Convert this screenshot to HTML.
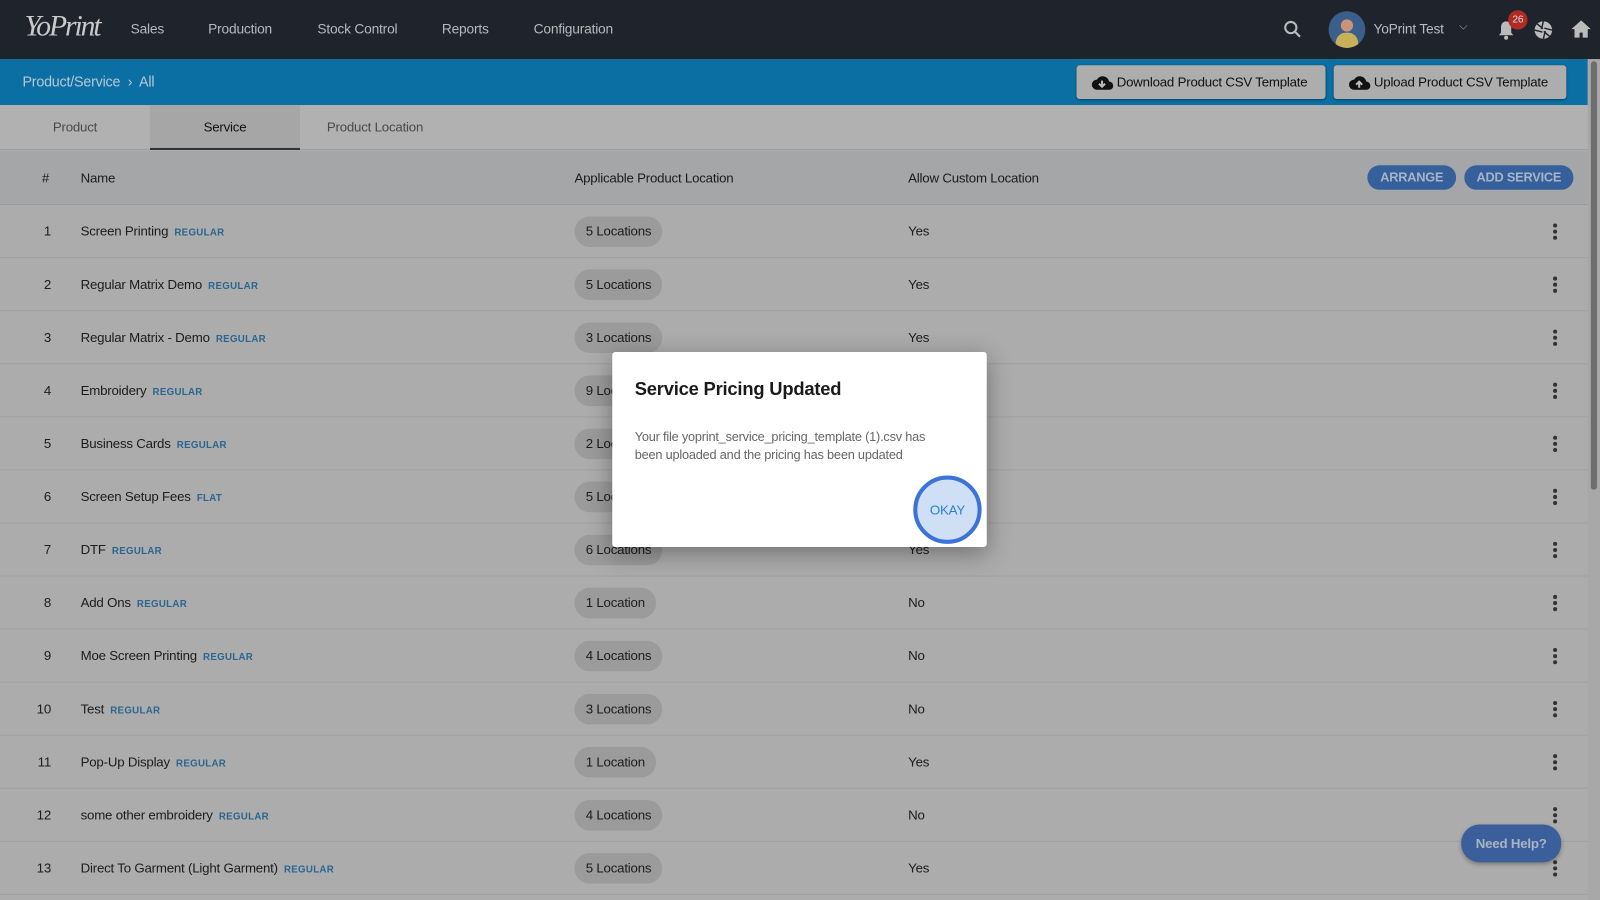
<!DOCTYPE html>
<html><head><meta charset="utf-8"><style>
*{box-sizing:border-box;margin:0;padding:0}
html,body{width:1600px;height:900px;overflow:hidden;background:#acacac}
#w{width:1568px;height:882px;transform:scale(1.020408);transform-origin:0 0;position:relative;font-family:"Liberation Sans",sans-serif;background:#acacac;color:#1c1c1c;font-size:13px;letter-spacing:-0.2px}
.top{position:absolute;left:0;top:0;width:1568px;height:58px;background:#1f232c}
.logo{position:absolute;left:24px;top:10px;font-family:"Liberation Serif",serif;font-style:italic;font-size:29px;color:#c9c9c9;letter-spacing:-2px}
.nav{position:absolute;top:21px;color:#b8b8b8;font-size:13.5px}
.bar{position:absolute;left:0;top:58px;width:1556px;height:45px;background:#0b6fa3}
.bc{position:absolute;left:22px;top:72px;color:#b6c8d6;font-size:14px}
.btn{position:absolute;top:64px;height:33px;background:#adadad;border-radius:3px;box-shadow:0 1px 2px rgba(0,0,0,.4);font-size:13px;color:#111;display:flex;align-items:center;padding-left:14px}
.tabs{position:absolute;left:0;top:103px;width:1556px;height:44px;background:#b1b1b1;border-bottom:1px solid #9e9e9e}
.tab{position:absolute;top:0;height:44px;width:147px;text-align:center;line-height:43px;color:#4a4a4a;font-size:13px}
.thead{position:absolute;left:0;top:148px;width:1556px;height:53px;background:#a5a6a8;border-bottom:1px solid #999}
.th{position:absolute;top:19px;font-size:13px;color:#1c1c1c}
.pill{position:absolute;top:162px;height:24px;border-radius:12px;background:#36609c;color:#a7b3c6;font-size:12.5px;font-weight:bold;line-height:24px;text-align:center}
.row{position:absolute;left:0;width:1556px;height:52px;border-bottom:1px solid #a0a0a0}
.row .n{position:absolute;left:20px;width:30px;text-align:right;top:18px}
.row .nm{position:absolute;left:79px;top:18px}
.tag{color:#2a6690;font-size:9.5px;font-weight:bold;letter-spacing:.3px;margin-left:6px}
.chip{position:absolute;left:563px;top:11px;height:30px;border-radius:15px;background:#9b9b9b;padding:0 11px;line-height:30px}
.yn{position:absolute;left:890px;top:18px}
.dots{position:absolute;left:1522px;top:18px;width:4px}
.dots i{display:block;width:4px;height:4px;border-radius:2px;background:#333;margin-bottom:2px}
.sb{position:absolute;left:1556px;top:58px;width:12px;height:824px;background:#a8a8a8}
.sb div{position:absolute;left:3px;top:2px;width:6px;height:420px;border-radius:3px;background:#6e6e6e}
.modal{position:absolute;left:600px;top:345px;width:367px;height:191px;background:#fff;border-radius:3px;box-shadow:0 6px 24px rgba(0,0,0,.35)}
.help{position:absolute;left:1432px;top:808px;width:98px;height:37px;border-radius:18px;background:#3a5f9a;color:#a9b5c6;font-weight:bold;font-size:13px;line-height:37px;text-align:center;box-shadow:0 2px 4px rgba(0,0,0,.3)}
</style></head><body><div id="w">
<div class="top"></div>
<div class="logo">YoPrint</div>
<div class="nav" style="left:128px">Sales</div>
<div class="nav" style="left:204px">Production</div>
<div class="nav" style="left:311px">Stock Control</div>
<div class="nav" style="left:433px">Reports</div>
<div class="nav" style="left:523px">Configuration</div>
<svg style="position:absolute;left:1258px;top:20px" width="18" height="18" viewBox="0 0 18 18"><circle cx="7" cy="7" r="5.5" stroke="#bbb" stroke-width="2" fill="none"/><path d="M11 11l5 5" stroke="#bbb" stroke-width="2.2"/></svg>
<div style="position:absolute;left:1302px;top:11px;width:36px;height:36px;border-radius:50%;background:#3a5f8a;overflow:hidden"><div style="position:absolute;left:12px;top:8px;width:12px;height:12px;border-radius:50%;background:#c9947a"></div><div style="position:absolute;left:7px;top:21px;width:22px;height:20px;border-radius:10px 10px 0 0;background:#c8b05a"></div></div>
<div class="nav" style="left:1346px;top:21px;color:#bbb">YoPrint Test</div>
<div class="nav" style="left:1430px;top:20px;font-size:11px">⌵</div>
<svg style="position:absolute;left:1467px;top:20px" width="18" height="20" viewBox="0 0 18 20"><path d="M9 1c-3 0-5 2.5-5 5.5V12l-2 2.5h14L14 12V6.5C14 3.5 12 1 9 1z" fill="#bbb"/><circle cx="9" cy="17" r="2" fill="#bbb"/></svg>
<div style="position:absolute;left:1478px;top:10px;width:19px;height:19px;border-radius:50%;background:#b12b26;color:#ddd;font-size:10px;text-align:center;line-height:19px">26</div>
<svg style="position:absolute;left:1503px;top:20px" width="19" height="19" viewBox="0 0 20 20"><circle cx="10" cy="10" r="9" fill="#bbb"/><path d="M10 1L8 9M19 10l-8-2M10 19l2-8M1 10l8 2M3.6 3.6l6 5M16.4 16.4l-6-5" stroke="#1f232c" stroke-width="1.5"/></svg>
<svg style="position:absolute;left:1540px;top:20px" width="19" height="17" viewBox="0 0 19 17"><path d="M9.5 0L0 8.5h3V17h5v-5h3v5h5V8.5h3z" fill="#bbb"/></svg>
<div class="bar"></div>
<div class="bc">Product/Service &nbsp;›&nbsp; All</div>
<div class="btn" style="left:1055px;width:244px"><svg width="22" height="16" viewBox="0 0 22 16"><path d="M6 15a5 5 0 010-10 6.5 6.5 0 0112 2 4 4 0 010 8z" fill="#111"/><path d="M11 6v6M8 9l3 3 3-3" stroke="#bbb" stroke-width="2" fill="none"/></svg>&nbsp;Download Product CSV Template</div>
<div class="btn" style="left:1307px;width:228px"><svg width="22" height="16" viewBox="0 0 22 16"><path d="M6 15a5 5 0 010-10 6.5 6.5 0 0112 2 4 4 0 010 8z" fill="#111"/><path d="M11 13V7M8 10l3-3 3 3" stroke="#bbb" stroke-width="2" fill="none"/></svg>&nbsp;Upload Product CSV Template</div>
<div class="tabs">
<div class="tab" style="left:0">Product</div>
<div class="tab" style="left:147px;background:#a6a6a6;color:#111;border-bottom:2px solid #333">Service</div>
<div class="tab" style="left:294px">Product Location</div>
</div>
<div class="thead"></div>
<div class="th" style="left:41px;top:167px">#</div>
<div class="th" style="left:79px;top:167px">Name</div>
<div class="th" style="left:563px;top:167px">Applicable Product Location</div>
<div class="th" style="left:890px;top:167px">Allow Custom Location</div>
<div class="pill" style="left:1340px;width:87px">ARRANGE</div>
<div class="pill" style="left:1435px;width:107px">ADD SERVICE</div>
<div class="row" style="top:201px"><span class="n">1</span><span class="nm">Screen Printing<span class="tag">REGULAR</span></span><span class="chip">5 Locations</span><span class="yn">Yes</span><span class="dots"><i></i><i></i><i></i></span></div>
<div class="row" style="top:253px"><span class="n">2</span><span class="nm">Regular Matrix Demo<span class="tag">REGULAR</span></span><span class="chip">5 Locations</span><span class="yn">Yes</span><span class="dots"><i></i><i></i><i></i></span></div>
<div class="row" style="top:305px"><span class="n">3</span><span class="nm">Regular Matrix - Demo<span class="tag">REGULAR</span></span><span class="chip">3 Locations</span><span class="yn">Yes</span><span class="dots"><i></i><i></i><i></i></span></div>
<div class="row" style="top:357px"><span class="n">4</span><span class="nm">Embroidery<span class="tag">REGULAR</span></span><span class="chip">9 Locations</span><span class="yn">Yes</span><span class="dots"><i></i><i></i><i></i></span></div>
<div class="row" style="top:409px"><span class="n">5</span><span class="nm">Business Cards<span class="tag">REGULAR</span></span><span class="chip">2 Locations</span><span class="yn">Yes</span><span class="dots"><i></i><i></i><i></i></span></div>
<div class="row" style="top:461px"><span class="n">6</span><span class="nm">Screen Setup Fees<span class="tag">FLAT</span></span><span class="chip">5 Locations</span><span class="yn">Yes</span><span class="dots"><i></i><i></i><i></i></span></div>
<div class="row" style="top:513px"><span class="n">7</span><span class="nm">DTF<span class="tag">REGULAR</span></span><span class="chip">6 Locations</span><span class="yn">Yes</span><span class="dots"><i></i><i></i><i></i></span></div>
<div class="row" style="top:565px"><span class="n">8</span><span class="nm">Add Ons<span class="tag">REGULAR</span></span><span class="chip">1 Location</span><span class="yn">No</span><span class="dots"><i></i><i></i><i></i></span></div>
<div class="row" style="top:617px"><span class="n">9</span><span class="nm">Moe Screen Printing<span class="tag">REGULAR</span></span><span class="chip">4 Locations</span><span class="yn">No</span><span class="dots"><i></i><i></i><i></i></span></div>
<div class="row" style="top:669px"><span class="n">10</span><span class="nm">Test<span class="tag">REGULAR</span></span><span class="chip">3 Locations</span><span class="yn">No</span><span class="dots"><i></i><i></i><i></i></span></div>
<div class="row" style="top:721px"><span class="n">11</span><span class="nm">Pop-Up Display<span class="tag">REGULAR</span></span><span class="chip">1 Location</span><span class="yn">Yes</span><span class="dots"><i></i><i></i><i></i></span></div>
<div class="row" style="top:773px"><span class="n">12</span><span class="nm">some other embroidery<span class="tag">REGULAR</span></span><span class="chip">4 Locations</span><span class="yn">No</span><span class="dots"><i></i><i></i><i></i></span></div>
<div class="row" style="top:825px"><span class="n">13</span><span class="nm">Direct To Garment (Light Garment)<span class="tag">REGULAR</span></span><span class="chip">5 Locations</span><span class="yn">Yes</span><span class="dots"><i></i><i></i><i></i></span></div>
<div class="sb"><div></div></div>
<div class="modal">
<div style="position:absolute;left:22px;top:26px;font-size:18px;font-weight:bold;color:#1a1a1a">Service Pricing Updated</div>
<div style="position:absolute;left:22px;top:74px;width:310px;font-size:12.5px;line-height:18px;color:#666">Your file yoprint_service_pricing_template (1).csv has<br>been uploaded and the pricing has been updated</div>
<div style="position:absolute;left:295px;top:121px;width:67px;height:67px;border-radius:50%;border:4px solid #3b73d9;background:#cfe0f6;color:#2e7fd0;font-size:13px;line-height:59px;text-align:center">OKAY</div>
</div>
<div class="help">Need Help?</div>
</div></body></html>
